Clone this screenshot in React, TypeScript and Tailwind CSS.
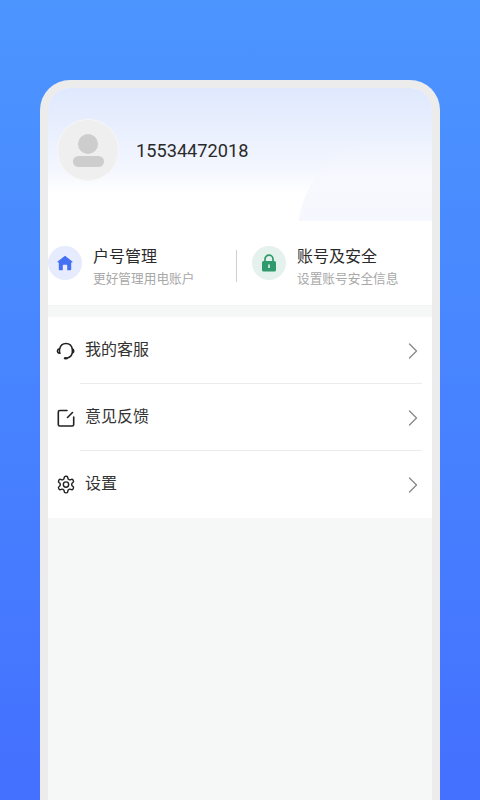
import React from 'react';

const cjk = { fontFamily: 'Roboto, "Noto Sans CJK SC", sans-serif' };

const Chevron = () => (
  <svg width="12" height="18" viewBox="0 0 12 18" fill="none" stroke="#8a8a8a" strokeWidth="1.4" strokeLinecap="round" strokeLinejoin="round">
    <path d="M2.5 2l7 7-7 7" />
  </svg>
);

const HeadsetIcon = () => (
  <svg width="20" height="20" viewBox="0 0 20 20" fill="none" stroke="#222" strokeWidth="1.5" strokeLinecap="round">
    <path d="M3.800 12.300C3.300 11 3.300 9.500 3.600 8C4.300 4.600 6.800 2.400 10 2.400s5.700 2.200 6.400 5.600" />
    <path d="M3.500 7.800c-1.300.3-2.100 1.100-2.100 2.200s.8 2 2.300 2.300" />
    <path d="M16.400 8c.9.300 1.400 1 1.400 2s-.5 1.800-1.400 2.100c-.2-1.400-.2-2.700 0-4.100z" />
    <path d="M16.200 12.300c-.6 2.400-2.200 4.100-4.800 4.700" />
    <ellipse cx="9.800" cy="17.300" rx="2.100" ry="1.300" fill="#222" stroke="none" />
  </svg>
);

const EditIcon = () => (
  <svg width="20" height="20" viewBox="0 0 20 20" fill="none" stroke="#222" strokeWidth="1.6" strokeLinecap="round" strokeLinejoin="round">
    <path d="M11 2.500H3.800c-.9 0-1.500.6-1.500 1.500v12.500c0 .9.6 1.500 1.500 1.500h12.400c.9 0 1.500-.6 1.500-1.500V9" />
    <path d="M11.500 9.500l5-5" />
  </svg>
);

const GearIcon = () => (
  <svg width="21" height="21" viewBox="0 0 24 24" fill="none" stroke="#222" strokeWidth="1.700" strokeLinecap="round" strokeLinejoin="round">
    <path d="M12.220 2h-.44a2 2 0 0 0-2 2v.18a2 2 0 0 1-1 1.730l-.43.250a2 2 0 0 1-2 0l-.15-.08a2 2 0 0 0-2.730.730l-.22.380a2 2 0 0 0 .730 2.730l.15.100a2 2 0 0 1 1 1.720v.510a2 2 0 0 1-1 1.740l-.15.090a2 2 0 0 0-.730 2.730l.22.380a2 2 0 0 0 2.730.730l.15-.08a2 2 0 0 1 2 0l.43.250a2 2 0 0 1 1 1.730V20a2 2 0 0 0 2 2h.44a2 2 0 0 0 2-2v-.18a2 2 0 0 1 1-1.730l.43-.250a2 2 0 0 1 2 0l.15.080a2 2 0 0 0 2.730-.730l.22-.390a2 2 0 0 0-.730-2.730l-.15-.080a2 2 0 0 1-1-1.740v-.500a2 2 0 0 1 1-1.740l.15-.090a2 2 0 0 0 .730-2.730l-.22-.380a2 2 0 0 0-2.730-.730l-.15.080a2 2 0 0 1-2 0l-.43-.250a2 2 0 0 1-1-1.730V4a2 2 0 0 0-2-2z" />
    <circle cx="12" cy="12" r="3.200" />
  </svg>
);

const menuItems = [
  { label: '我的客服', icon: <HeadsetIcon /> },
  { label: '意见反馈', icon: <EditIcon /> },
  { label: '设置', icon: <GearIcon /> },
];

export default function App() {
  return (
    <div className="h-[800px] w-[480px] overflow-hidden bg-gradient-to-b from-[#4c95ff] to-[#4470ff] px-10 pt-20" style={cjk}>
      <div className="flex h-[728px] flex-col overflow-hidden rounded-t-[30px] border-x-8 border-t-8 border-[#ececec] bg-[#f6f8f8]">
        {/* header */}
        <div className="relative h-[133px] shrink-0 overflow-hidden bg-gradient-to-b from-[#dfe8fd] via-[#f3f6fe] via-60% to-white to-80%">
          <div className="absolute left-[250px] top-[50px] h-[190px] w-[190px] rounded-full bg-gradient-to-b from-[#f6f8fe]/0 via-[#f6f8fe] via-30% to-[#f3f5fe]" />
          <div className="relative flex items-center pl-[9px] pt-[31px]">
            <div className="flex h-[62px] w-[62px] flex-col items-center rounded-full border border-[#f7f7f7] bg-[#efefef] pt-[14px]">
              <div className="h-5 w-5 rounded-full bg-[#cdcdcd]" />
              <div className="mt-[2px] h-[11px] w-[31px] rounded-full bg-[#cdcdcd]" />
            </div>
            <span className="ml-[17px] mt-[2px] text-[18.200px] text-[#2a2a2a]">15534472018</span>
          </div>
        </div>

        {/* account cards */}
        <div className="flex h-[85px] shrink-0 items-center border-b border-[#f3f3f3] bg-white">
          <div className="flex w-[188px] items-center">
            <div className="flex h-[34px] w-[34px] items-center justify-center rounded-full bg-[#e6ecfe]">
              <svg width="16" height="16" viewBox="0 0 16 16" fill="#4470f4">
                <path d="M8 .8L.6 6.600c-.3.300-.1.800.3.800H1.800v6.800c0 .6.400 1 1 1h3V10.500c0-.4.300-.700.700-.700h3c.4 0 .7.300.7.700V15.200h3c.6 0 1-.4 1-1V7.400h.900c.4 0 .6-.5.300-.8z" />
              </svg>
            </div>
            <div className="ml-[11px] mt-[6px]">
              <div className="text-base leading-[22px] text-[#2a2a2a]">户号管理</div>
              <div className="mt-[3px] text-[12.700px] leading-4 text-[#a8a8a8]">更好管理用电账户</div>
            </div>
          </div>
          <div className="mt-[6px] h-8 w-px bg-[#cfcfcf]" />
          <div className="ml-[15px] flex items-center">
            <div className="flex h-[34px] w-[34px] items-center justify-center rounded-full bg-[#e4f1ec]">
              <svg width="16" height="18" viewBox="0 0 16 18">
                <path d="M4 8V5.200a4 4 0 0 1 8 0V8" fill="none" stroke="#2f9a6c" strokeWidth="1.700" />
                <rect x="1" y="7" width="14" height="10.500" rx="1.500" fill="#2f9a6c" />
                <rect x="7.200" y="10.500" width="1.600" height="3.500" fill="#e4f1ec" />
              </svg>
            </div>
            <div className="ml-[11px] mt-[6px]">
              <div className="text-base leading-[22px] text-[#2a2a2a]">账号及安全</div>
              <div className="mt-[3px] text-[12.700px] leading-4 text-[#a8a8a8]">设置账号安全信息</div>
            </div>
          </div>
        </div>

        {/* menu */}
        <div className="mt-[11px] shrink-0 bg-white">
          {menuItems.map((item, i) => (
            <div key={item.label} className="relative flex h-[67px] items-center pl-[8px] pr-[13px]">
              <div className="flex w-5 justify-center">{item.icon}</div>
              <span className="mb-[2px] ml-[9px] text-base text-[#333333]">{item.label}</span>
              <div className="ml-auto flex"><Chevron /></div>
              {i < 2 && <div className="absolute bottom-0 left-8 right-[10px] h-px bg-[#ececec]" />}
            </div>
          ))}
        </div>
      </div>
    </div>
  );
}
